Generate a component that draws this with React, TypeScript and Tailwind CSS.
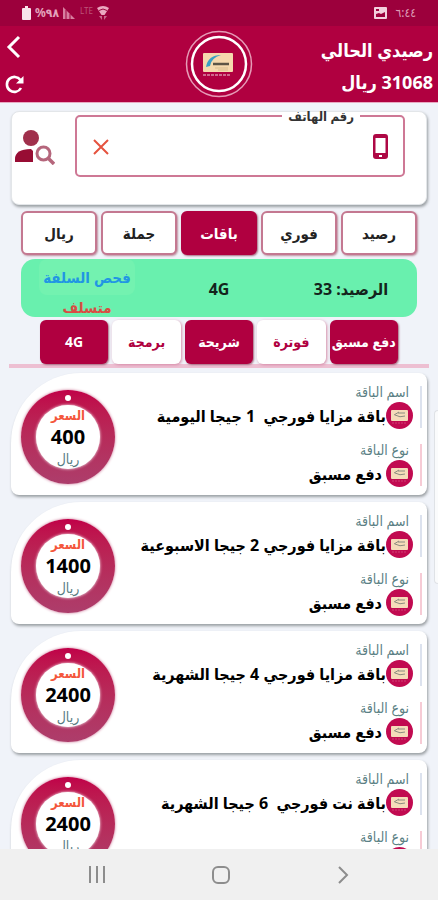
import { useState } from "react";

interface Bundle {
  name: string;
  type: string;
  price: number;
}

const bundles: Bundle[] = [
  { name: "باقة مزايا فورجي \u00a01 جيجا اليومية", type: "دفع مسبق", price: 400 },
  { name: "باقة مزايا فورجي 2 جيجا الاسبوعية", type: "دفع مسبق", price: 1400 },
  { name: "باقة مزايا فورجي 4 جيجا الشهرية", type: "دفع مسبق", price: 2400 },
  { name: "باقة نت فورجي \u00a06 جيجا الشهرية", type: "دفع مسبق", price: 2400 },
];

const services = ["رصيد", "فوري", "باقات", "جملة", "ريال"];

const filters = [
  { label: "دفع مسبق", filled: true },
  { label: "فوترة", filled: false },
  { label: "شريحة", filled: true },
  { label: "برمجة", filled: false },
  { label: "4G", filled: true },
];

function StatusBar() {
  return (
    <div className="flex h-[26px] shrink-0 items-center justify-between bg-[#9c003c] px-[22px] text-xs text-[#dd9cb6]">
      <div className="flex items-center gap-2">
        <span>٦:٤٤</span>
        <svg className="h-3 w-[13px]" viewBox="0 0 13 12" aria-hidden="true">
          <path
            fill="#f3cfdd"
            fillRule="evenodd"
            d="M1 0h11a1 1 0 011 1v10a1 1 0 01-1 1H1a1 1 0 01-1-1V1a1 1 0 011-1zM2 7v3h9V5L7 7 5 6zM2 2v2h3V2z"
          />
        </svg>
      </div>
      <div className="flex items-center gap-1">
        <svg className="h-[14px] w-3" viewBox="0 0 12 14" aria-hidden="true">
          <path fill="#eba8c0" d="M0 2Q6-2 12 2L7.500 9h-3z" />
          <path stroke="#9c003c" d="M2 4.500q4-3 8 0" fill="none" />
          <path fill="#c9678a" d="M2 10h3v4zM10 10H7v4z" />
        </svg>
        <span className="h-4 w-[14px] text-[8px] leading-3 text-[#bd5479]">LTE</span>
        <svg className="h-3 w-3" viewBox="0 0 12 12" aria-hidden="true">
          <path fill="#d77f9f" d="M0 0l12 12H0z" />
          <path stroke="#9c003c" d="M3 3v9M7 7v5" />
        </svg>
        <span dir="ltr" className="font-bold text-[#e3a3bb]">
          %٩٨
        </span>
        <svg className="h-[14px] w-[9px]" viewBox="0 0 9 14" aria-hidden="true">
          <path fill="#f8e3eb" d="M3 0h3v2h2a1 1 0 011 1v10a1 1 0 01-1 1H1a1 1 0 01-1-1V3a1 1 0 011-1h2z" />
        </svg>
      </div>
    </div>
  );
}

function Logo() {
  return (
    <svg className="size-[68px]" viewBox="0 0 68 68" aria-hidden="true">
      <circle cx="34" cy="34" r="32.5" fill="none" stroke="#e69cb7" strokeWidth="1.5" />
      <circle cx="34" cy="34" r="27" fill="none" stroke="#fff" strokeWidth="2.5" />
      <rect x="18" y="23" width="30" height="19" rx="1" fill="#f6d9ae" />
      <path d="M21 37q2-12 15-12-10 3-11 11z" fill="#3a9fc4" />
      <path d="M28 34h16" stroke="#5d5546" strokeWidth="2.500" />
      <path d="M30 38h13M33 40h10" stroke="#d8bd8f" />
      <path d="M18 45h27" stroke="#d0688d" strokeWidth="2" strokeDasharray="3 1" />
    </svg>
  );
}

function SimBadge() {
  return (
    <svg className="size-[27px] shrink-0" viewBox="0 0 27 27" aria-hidden="true">
      <circle cx="13.5" cy="13.5" r="13.5" fill="#c10a50" />
      <rect x="5" y="8" width="17" height="11" rx="1" fill="#f5dcba" />
      <path d="M8 13l5-3M9 13q5 3 10 1M12 11h7" stroke="#8b8c80" fill="none" />
      <path d="M6 21h15" stroke="#cf3f75" strokeDasharray="2 1" />
    </svg>
  );
}

function Header() {
  return (
    <header className="flex h-[77px] shrink-0 items-center border-b border-[#e8a9c1] bg-[#b00040] px-[5px] text-white">
      <div className="flex-1 pt-1 text-lg leading-8 font-bold">
        <p>رصيدي الحالي</p>
        <p>31068 ريال</p>
      </div>
      <Logo />
      <div className="flex flex-1 flex-col items-end gap-4">
        <button type="button" aria-label="رجوع">
          <svg className="h-6 w-[16px]" viewBox="0 0 16 24" aria-hidden="true">
            <path d="M14 2L4 12l10 10" fill="none" stroke="#fff" strokeWidth="3" />
          </svg>
        </button>
        <button type="button" aria-label="تحديث">
          <svg className="size-[19px]" viewBox="0 0 19 19" aria-hidden="true">
            <path d="M15.500 5A7.500 7.500 0 1016 13" fill="none" stroke="#fff" strokeWidth="2.600" />
            <path d="M18.500 1v7.500H11z" fill="#fff" />
          </svg>
        </button>
      </div>
    </header>
  );
}

function PhoneSearch() {
  const [phone, setPhone] = useState("");

  return (
    <section className="flex h-[94px] shrink-0 items-start rounded-lg border border-[#e3e6e9] bg-white pr-[21px] shadow-[1px_2px_3px_#9a9fa3]">
      <fieldset className="-mt-1 h-[69px] min-w-0 flex-1 rounded-[5px] border-2 border-[#ce7895] pr-[43px]">
        <legend className="px-[6px] text-[13px] leading-4 font-bold text-[#333]">
          <label htmlFor="phone">رقم الهاتف</label>
        </legend>
        <div className="-mr-7 flex h-[45px] items-center pl-4">
          <svg className="h-[25px] w-[15px] shrink-0" viewBox="0 0 15 25" aria-hidden="true">
            <path
              fill="#ae0845"
              fillRule="evenodd"
              d="M3 0h9a3 3 0 013 3v19a3 3 0 01-3 3H3a3 3 0 01-3-3V3a3 3 0 013-3zM2.500 4v15h10V4zM6 21v2h3v-2z"
            />
          </svg>
          <input
            id="phone"
            type="tel"
            value={phone}
            onChange={(e) => setPhone(e.target.value)}
            className="h-9 min-w-0 flex-1 bg-transparent px-3 outline-none"
          />
          <button type="button" aria-label="مسح" onClick={() => setPhone("")}>
            <svg className="size-4" viewBox="0 0 16 16" aria-hidden="true">
              <path d="M1 1l14 14M15 1L1 15" stroke="#e5533f" strokeWidth="2" />
            </svg>
          </button>
        </div>
      </fieldset>
      <button type="button" aria-label="بحث عن مشترك" className="mt-[17px] mr-5 ml-[3px]">
        <svg className="h-[36px] w-10" viewBox="0 0 40 36" aria-hidden="true">
          <circle cx="16" cy="9" r="8" fill="#a0304c" />
          <path d="M0 33v-3q0-10 16-10l2 2v11z" fill="#980d34" />
          <circle cx="28.500" cy="24.500" r="6.500" fill="#fff" stroke="#b5667c" strokeWidth="3" />
          <path d="M33 29l6 6" stroke="#b5667c" strokeWidth="3.500" />
        </svg>
      </button>
    </section>
  );
}

function ServiceTabs() {
  return (
    <nav className="mx-[10px] mt-[6px] flex shrink-0 gap-1">
      {services.map((label) => (
        <button
          key={label}
          type="button"
          className={
            label === "باقات"
              ? "h-11 flex-1 rounded-md border-2 border-[#b00040] bg-[#b00040] text-[15px] font-bold text-white shadow-[1px_1px_2px_#a66b80]"
              : "h-11 flex-1 rounded-md border-2 border-[#c47891] bg-white text-[15px] font-bold text-[#222] shadow-[1px_1px_2px_#bf91a1]"
          }
        >
          {label}
        </button>
      ))}
    </nav>
  );
}

function BalanceBanner() {
  return (
    <section className="mx-[10px] mt-1 grid h-[58px] shrink-0 grid-cols-3 items-center rounded-[14px] bg-[#69f0ae] text-center text-base font-bold text-[#14241c]">
      <p>الرصيد: 33</p>
      <p>4G</p>
      <div className="flex h-full flex-col items-center">
        <button type="button" className="h-9 rounded-lg bg-[#73f2b0] px-1 text-[15px] text-[#2196e3]">
          فحص السلفة
        </button>
        <p className="text-[15px] leading-6 text-[#d94c43]">متسلف</p>
      </div>
    </section>
  );
}

function LineFilters() {
  return (
    <div className="-mx-[2px] mt-[3px] flex shrink-0 gap-1 border-b-4 border-[#edbfd2] px-[31px]">
      {filters.map(({ label, filled }) => (
        <button
          key={label}
          type="button"
          className={
            filled
              ? "h-11 flex-1 rounded-md bg-[#b00040] text-sm font-bold whitespace-nowrap text-white shadow-[1px_1px_2px_#a66b80]"
              : "h-11 flex-1 rounded-md bg-white text-sm font-bold whitespace-nowrap text-[#b00040] shadow-[1px_1px_3px_#d68ca8]"
          }
        >
          {label}
        </button>
      ))}
    </div>
  );
}

function PriceRing({ price }: { price: number }) {
  return (
    <div className="relative flex size-[94px] shrink-0 flex-col items-center rounded-full bg-linear-to-b from-[#c00048] to-[#ad3d6b] pt-[15px] shadow-[0_0_3px_#c96a8e]">
      <span className="absolute top-[5px] size-[6px] rounded-full bg-white" />
      <div className="flex size-16 flex-col items-center rounded-full bg-white shadow-[0_0_3px_#fff]">
        <span className="text-[13px] leading-5 font-bold text-[#f4573d]">السعر</span>
        <span className="text-xl leading-6 font-bold text-black">{price}</span>
        <span className="text-sm leading-5 text-[#587c82]">ريال</span>
      </div>
    </div>
  );
}

function BundleCard({ bundle }: { bundle: Bundle }) {
  return (
    <article className="flex h-[122px] shrink-0 items-start justify-between rounded-lg rounded-tl-[70px] bg-white pt-[13px] pr-[5px] pl-[10px] shadow-[1px_2px_3px_#9a9fa3]">
      <dl className="flex flex-col gap-4">
        <div className="h-[42px] border-r-2 border-[#dce2ee] pr-[7px]">
          <dt className="pr-1 text-sm leading-3 text-[#5b7f84]">اسم الباقة</dt>
          <dd className="mt-1 flex items-center text-base font-bold whitespace-nowrap text-black">
            <SimBadge />
            {bundle.name}
          </dd>
        </div>
        <div className="h-[42px] border-r-2 border-[#f6cbd5] pr-[7px]">
          <dt className="pr-1 text-sm leading-3 text-[#5b7f84]">نوع الباقة</dt>
          <dd className="mt-1 flex items-center gap-1 text-base font-bold text-black">
            <SimBadge />
            {bundle.type}
          </dd>
        </div>
      </dl>
      <div className="pt-1">
        <PriceRing price={bundle.price} />
      </div>
    </article>
  );
}

function NavigationBar() {
  return (
    <nav className="flex h-[51px] shrink-0 items-center justify-around bg-[#f0f0f0] px-9">
      <button type="button" aria-label="السابق">
        <svg className="h-[18px] w-3" viewBox="0 0 12 18" aria-hidden="true">
          <path d="M2 1l8 8-8 8" fill="none" stroke="#8d8d8d" strokeWidth="2" />
        </svg>
      </button>
      <button type="button" aria-label="الرئيسية">
        <svg className="size-[18px]" viewBox="0 0 18 18" aria-hidden="true">
          <rect x="1" y="1" width="16" height="16" rx="5" fill="none" stroke="#8d8d8d" strokeWidth="2" />
        </svg>
      </button>
      <button type="button" aria-label="التطبيقات">
        <svg className="h-[17px] w-4" viewBox="0 0 16 17" aria-hidden="true">
          <path d="M1 0v17M8 0v17M15 0v17" stroke="#8d8d8d" strokeWidth="2" />
        </svg>
      </button>
    </nav>
  );
}

export default function App() {
  return (
    <div
      dir="rtl"
      className="relative flex h-screen flex-col bg-[#f0f3f9] [font-family:'Noto_Sans','DejaVu_Sans_Condensed','DejaVu_Sans',sans-serif]"
    >
      <StatusBar />
      <Header />
      <main className="flex min-h-0 flex-1 flex-col overflow-hidden px-[11px] pt-2">
        <PhoneSearch />
        <ServiceTabs />
        <BalanceBanner />
        <LineFilters />
        <div className="mt-[5px] flex flex-col gap-[7px]">
          {bundles.map((bundle) => (
            <BundleCard key={bundle.name} bundle={bundle} />
          ))}
        </div>
      </main>
      <NavigationBar />
      {/* edge panel handle */}
      <div className="absolute top-[410px] right-0 h-[174px] w-[4px] rounded-l-sm border border-r-0 border-[#dfe2e6] bg-[#fafbfc]" />
    </div>
  );
}
